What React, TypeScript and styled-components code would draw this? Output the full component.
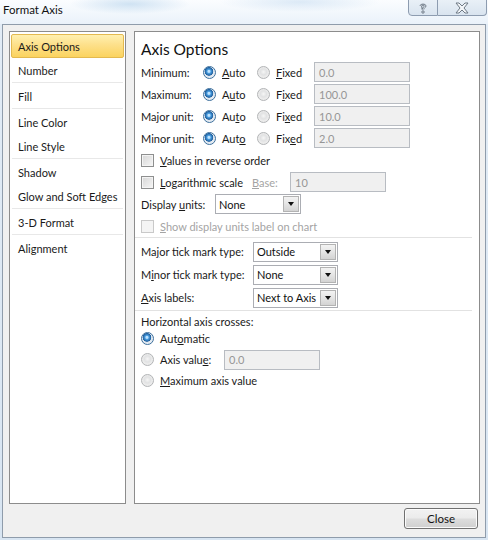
import * as React from 'react';
import styled, { createGlobalStyle } from 'styled-components';

const GlobalStyle = createGlobalStyle`
    html, body {
        margin: 0;
        padding: 0;
        background: #dfe9f4;
    }
    body {
        font-family: Lato, "Noto Sans", Arial, sans-serif;
        font-size: 11px;
        color: #1a1a1a;
    }
`;

const Window = styled.div`
    width: 488px;
    height: 540px;
    display: flex;
    flex-direction: column;
    background: linear-gradient(180deg, #f4f8fc 0px, #e2ecf6 24px, #d8e5f2 100%);
    overflow: hidden;
`;

const TitleBar = styled.div`
    height: 24px;
    display: flex;
    justify-content: space-between;
    align-items: flex-start;
    padding-left: 3px;
    background:
        radial-gradient(ellipse 60px 10px at 130px 4px, rgba(180, 210, 235, 0.6), transparent),
        radial-gradient(ellipse 80px 10px at 300px 2px, rgba(190, 215, 238, 0.5), transparent),
        linear-gradient(180deg, #fbfdff, #eaf2fa);
`;

const Title = styled.span`
    margin-top: 3px;
    font-size: 11.5px;
    color: #111;
`;

const Caption = styled.div`
    display: flex;
    margin-right: 1px;
    margin-top: -1px;
`;

const CaptionButton = styled.div<{ $wide?: boolean }>`
    width: ${p => (p.$wide ? 48 : 28)}px;
    height: 15px;
    display: flex;
    align-items: center;
    justify-content: center;
    border: 1px solid #8d9cb0;
    border-left: ${p => (p.$wide ? 'none' : '1px solid #8d9cb0')};
    border-radius: ${p => (p.$wide ? '0 0 4px 0' : '0 0 0 4px')};
    background: linear-gradient(180deg, #e9f0f7, #d9e4ef);
`;

const Frame = styled.div`
    flex: 1;
    padding: 0 2px 2px 2px;
    display: flex;
`;

const Client = styled.div`
    flex: 1;
    display: flex;
    flex-direction: column;
    background: #f0f0f0;
    border: 1px solid #8f9cab;
    padding: 6px 5px 8px 6px;
`;

const Panels = styled.div`
    flex: 1;
    display: flex;
    gap: 8px;
`;

const Nav = styled.div`
    width: 117px;
    box-sizing: border-box;
    background: #fff;
    border: 1px solid #8c8c8c;
    padding: 2px 1px;
`;

const NavItem = styled.div<{ $selected?: boolean }>`
    height: 24px;
    box-sizing: border-box;
    display: flex;
    align-items: center;
    padding-left: 6px;
    border-radius: 2px;
    border: 1px solid ${p => (p.$selected ? '#e3b94f' : 'transparent')};
    background: ${p =>
        p.$selected ? 'linear-gradient(180deg, #fff0b0 0%, #fde08a 45%, #fbd35f 100%)' : 'transparent'};
    white-space: nowrap;
`;

const NavSeparator = styled.div`
    height: 1px;
    margin: 0 1px 1px 1px;
    background: #e8e8e8;
`;

const Content = styled.div`
    flex: 1;
    box-sizing: border-box;
    background: #fff;
    border: 1px solid #8c8c8c;
    padding: 6px 6px 0 6px;
`;

const Heading = styled.div`
    font-size: 15.5px;
    line-height: 23px;
    color: #111;
`;

const Row = styled.div<{ $h?: number; $disabled?: boolean; $end?: boolean }>`
    height: ${p => p.$h ?? 22}px;
    display: flex;
    align-items: ${p => (p.$end ? 'flex-end' : 'center')};
    white-space: nowrap;
    color: ${p => (p.$disabled ? '#a4a4a4' : '#1a1a1a')};
`;

const Label = styled.span<{ $w?: number; $muted?: boolean }>`
    width: ${p => p.$w ?? 62}px;
    flex: none;
    color: ${p => (p.$muted ? '#a4a4a4' : 'inherit')};
`;

const Option = styled.label<{ $w?: number }>`
    width: ${p => (p.$w ? `${p.$w}px` : 'auto')};
    display: flex;
    align-items: center;
    gap: 6px;
    flex: none;
`;

const Radio = styled.span<{ $checked?: boolean }>`
    width: 13px;
    height: 13px;
    box-sizing: border-box;
    border-radius: 50%;
    flex: none;
    border: 1px solid ${p => (p.$checked ? '#3c6f9c' : '#b2b4b6')};
    background: ${p =>
        p.$checked
            ? 'radial-gradient(circle at 45% 40%, #bfe3ff 0 1px, #4a9ee0 2px, #1f5f9e 4px, #dfe7ef 4.6px, #f2f6fa 100%)'
            : 'radial-gradient(circle at 50% 45%, #f6f6f6 0, #e1e2e3 3px, #ececec 5px)'};
`;

const Check = styled.span<{ $disabled?: boolean }>`
    width: 13px;
    height: 13px;
    box-sizing: border-box;
    flex: none;
    border: 1px solid ${p => (p.$disabled ? '#c9c9c9' : '#8e8f8f')};
    background: ${p =>
        p.$disabled
            ? '#f4f4f4'
            : 'linear-gradient(135deg, #d6d6d6 0%, #e6e6e6 50%, #f6f6f6 100%)'};
    box-shadow: inset 0 0 0 1px #f4f4f4;
`;

const TextBox = styled.div<{ $w?: number }>`
    width: ${p => p.$w ?? 96}px;
    height: 20px;
    box-sizing: border-box;
    border: 1px solid #b8bcc2;
    background: #f0f0f0;
    color: #969696;
    display: flex;
    align-items: center;
    padding-left: 4px;
    flex: none;
`;

const Select = styled.div<{ $w?: number }>`
    width: ${p => p.$w ?? 85}px;
    height: 20px;
    box-sizing: border-box;
    border: 1px solid #abadb3;
    background: #fff;
    display: flex;
    align-items: stretch;
    flex: none;
    color: #111;
`;

const SelectValue = styled.span`
    flex: 1;
    display: flex;
    align-items: center;
    padding-left: 3px;
    overflow: hidden;
`;

const SelectArrow = styled.span`
    width: 16px;
    margin: 1px;
    box-sizing: border-box;
    border: 1px solid #b3b3b3;
    background: linear-gradient(180deg, #f3f3f3 0%, #e5e5e5 50%, #d3d3d3 100%);
    display: flex;
    align-items: center;
    justify-content: center;

    &::after {
        content: '';
        border-left: 3.5px solid transparent;
        border-right: 3.5px solid transparent;
        border-top: 4px solid #111;
    }
`;

const Divider = styled.div`
    height: 1px;
    margin: 0 1px 0 -6px;
    background: #e2e2e2;
`;

const Footer = styled.div`
    display: flex;
    justify-content: flex-end;
    padding: 4px 2px 0 0;
`;

const Button = styled.button`
    width: 74px;
    height: 21px;
    font: inherit;
    font-size: 11.5px;
    color: #111;
    border: 1px solid #707070;
    border-radius: 3px;
    background: linear-gradient(180deg, #f2f2f2 0%, #ebebeb 48%, #dddddd 52%, #cfcfcf 100%);
    box-shadow: inset 0 0 0 1px #fbfbfb;
    padding: 0;
`;

const U = styled.span`
    text-decoration: underline;
`;

const navGroups = [
    ['Axis Options', 'Number'],
    ['Fill'],
    ['Line Color', 'Line Style'],
    ['Shadow', 'Glow and Soft Edges'],
    ['3-D Format'],
    ['Alignment'],
];

// access keys are underlined, split as [before, key, after]
const unitRows: { label: string; auto: string[]; fixed: string[]; value: string }[] = [
    { label: 'Minimum:', auto: ['', 'A', 'uto'], fixed: ['', 'F', 'ixed'], value: '0.0' },
    { label: 'Maximum:', auto: ['A', 'u', 'to'], fixed: ['F', 'i', 'xed'], value: '100.0' },
    { label: 'Major unit:', auto: ['Au', 't', 'o'], fixed: ['Fi', 'x', 'ed'], value: '10.0' },
    { label: 'Minor unit:', auto: ['Aut', 'o', ''], fixed: ['Fix', 'e', 'd'], value: '2.0' },
];

const tickRows = [
    { label: ['Ma', 'j', 'or tick mark type:'], value: 'Outside' },
    { label: ['M', 'i', 'nor tick mark type:'], value: 'None' },
    { label: ['', 'A', 'xis labels:'], value: 'Next to Axis' },
];

const Keyed = ({ parts }: { parts: string[] }) => (
    <span>
        {parts[0]}
        <U>{parts[1]}</U>
        {parts[2]}
    </span>
);

export default function App() {
    return (
        <Window>
            <GlobalStyle />
            <TitleBar>
                <Title>Format Axis</Title>
                <Caption>
                    <CaptionButton>
                        <svg width="10" height="12" viewBox="0 0 10 12">
                            <path
                                d="M2 4 C2 1.5 8 1.5 8 4 C8 5.5 5.8 5.6 5.8 7.5 M4.2 7.5 C4.2 5 6.4 5 6.4 4 C6.4 2.8 3.6 2.8 3.6 4 Z"
                                fill="none"
                                stroke="#6f7a86"
                                strokeWidth="1"
                            />
                            <circle cx="5" cy="10" r="1.2" fill="none" stroke="#6f7a86" strokeWidth="1" />
                        </svg>
                    </CaptionButton>
                    <CaptionButton $wide>
                        <svg width="14" height="12" viewBox="0 0 14 12">
                            <path
                                d="M1 1 H4 L7 4 L10 1 H13 L9 6 L13 11 H10 L7 8 L4 11 H1 L5 6 Z"
                                fill="#f3f6f9"
                                stroke="#6f7a86"
                                strokeWidth="1"
                            />
                        </svg>
                    </CaptionButton>
                </Caption>
            </TitleBar>
            <Frame>
                <Client>
                    <Panels>
                        <Nav>
                            {navGroups.map((group, gi) => (
                                <React.Fragment key={gi}>
                                    {gi > 0 && <NavSeparator />}
                                    {group.map(name => (
                                        <NavItem key={name} $selected={name === 'Axis Options'}>
                                            {name}
                                        </NavItem>
                                    ))}
                                </React.Fragment>
                            ))}
                        </Nav>
                        <Content>
                            <Heading>Axis Options</Heading>
                            {unitRows.map(r => (
                                <Row key={r.label}>
                                    <Label>{r.label}</Label>
                                    <Option $w={54}>
                                        <Radio $checked />
                                        <Keyed parts={r.auto} />
                                    </Option>
                                    <Option $w={57}>
                                        <Radio />
                                        <Keyed parts={r.fixed} />
                                    </Option>
                                    <TextBox>{r.value}</TextBox>
                                </Row>
                            ))}
                            <Row>
                                <Option>
                                    <Check />
                                    <Keyed parts={['', 'V', 'alues in reverse order']} />
                                </Option>
                            </Row>
                            <Row>
                                <Option $w={111}>
                                    <Check />
                                    <Keyed parts={['', 'L', 'ogarithmic scale']} />
                                </Option>
                                <Label $w={38} $muted>
                                    <Keyed parts={['', 'B', 'ase:']} />
                                </Label>
                                <TextBox>10</TextBox>
                            </Row>
                            <Row>
                                <Label $w={74}>
                                    <Keyed parts={['Display ', 'u', 'nits:']} />
                                </Label>
                                <Select $w={86}>
                                    <SelectValue>None</SelectValue>
                                    <SelectArrow />
                                </Select>
                            </Row>
                            <Row $disabled>
                                <Option>
                                    <Check $disabled />
                                    <Keyed parts={['', 'S', 'how display units label on chart']} />
                                </Option>
                            </Row>
                            <Divider />
                            <Row $h={2} />
                            {tickRows.map(r => (
                                <Row key={r.value} $h={23}>
                                    <Label $w={112}>
                                        <Keyed parts={r.label} />
                                    </Label>
                                    <Select>
                                        <SelectValue>{r.value}</SelectValue>
                                        <SelectArrow />
                                    </Select>
                                </Row>
                            ))}
                            <Row $h={1} />
                            <Divider />
                            <Row $h={17} $end>Horizontal axis crosses:</Row>
                            <Row $h={21}>
                                <Option>
                                    <Radio $checked />
                                    <Keyed parts={['Aut', 'o', 'matic']} />
                                </Option>
                            </Row>
                            <Row $h={21}>
                                <Option $w={83}>
                                    <Radio />
                                    <Keyed parts={['Axis valu', 'e', ':']} />
                                </Option>
                                <TextBox>0.0</TextBox>
                            </Row>
                            <Row $h={21}>
                                <Option>
                                    <Radio />
                                    <Keyed parts={['', 'M', 'aximum axis value']} />
                                </Option>
                            </Row>
                        </Content>
                    </Panels>
                    <Footer>
                        <Button>Close</Button>
                    </Footer>
                </Client>
            </Frame>
        </Window>
    );
}
